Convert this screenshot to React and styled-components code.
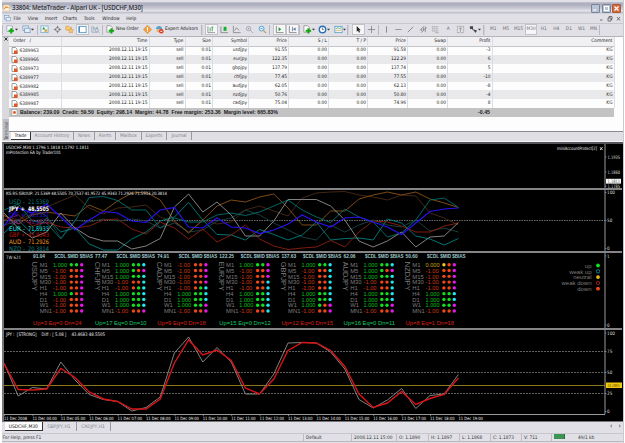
import React, { Component } from 'react';
import styled, { createGlobalStyle } from 'styled-components';

const GlobalStyle = createGlobalStyle`
  body {
    margin: 0;
    background: #fff;
    overflow: hidden;
  }
  * {
    box-sizing: border-box;
  }
`
const Window = styled.div`
  width: 622px;
  height: 443px;
  margin-left: 2px;
  padding-top: 2px;
  display: flex;
  flex-direction: column;
  background: #e0e0e6;
  border-right: 1px solid #c9c9cf;
  font-family: "DejaVu Sans Condensed", "Liberation Sans", sans-serif;
  font-size: 4.8px;
  line-height: 1;
  color: #222;
  white-space: nowrap;
`
const TitleBar = styled.div`
  height: 12px;
  display: flex;
  align-items: center;
  padding: 0 2px 0 1px;
  background: linear-gradient(#c4c4d0 0, #a9abbb 2px, #c6c7d1 6px, #e4e4ea 9px, #b9b9c4 11px, #e6e6ea 12px);
`
const Title = styled.span`
  flex: 1;
  margin-left: 2px;
  font-family: "Open Sans", sans-serif;
  font-weight: 600;
  font-size: 6.2px;
  letter-spacing: -0.15px;
  color: #33333c;
`
const WindowButton = styled.div`
  width: 9px;
  height: 9px;
  margin-left: 1.5px;
  border: 1px solid ${props => props.$close ? "#a8583c" : "#7c8296"};
  border-radius: 1px;
  background: ${props => props.$close ? "#d86a38" : "#b9c3d6"};
  svg {
    display: block;
  }
`
const MenuBar = styled.div`
  height: 9.5px;
  display: flex;
  align-items: center;
  padding-left: 2px;
  border-bottom: 1px solid #c8c8ce;
`
const MenuIcon = styled.svg`
  margin-right: 2.5px;
`
const MenuItem = styled.span`
  width: ${props => props.w}px;
  font-size: 4.9px;
`
const Spacer = styled.div`
  flex: 1;
`
const Toolbar = styled.div`
  height: 13.5px;
  display: flex;
  align-items: center;
  border-bottom: 1px solid #b4b4b8;
`
const Tool = styled.div`
  width: ${props => props.w}px;
  height: 11px;
  display: flex;
  flex: none;
  align-items: center;
  justify-content: center;
  color: #6a6a70;
  font-size: 4.8px;
  background: ${props => props.$pressed ? "#f6f6f8" : "none"};
  border: 1px solid ${props => props.$pressed ? "#c2c2c8" : "transparent"};
  svg {
    flex: none;
  }
`
const ToolLabel = styled.span`
  font-size: 4.8px;
  letter-spacing: -0.05px;
  margin-left: 0.5px;
  color: #222;
`
const Divider = styled.i`
  flex: none;
  width: 2px;
  height: 10px;
  margin-right: ${props => props.w - 2}px;
  border-left: 1px solid #b8b8be;
  border-right: ${props => props.$double ? "1px solid #d0d0d6" : "none"};
`
const Terminal = styled.div`
  height: 105px;
  display: flex;
  border-bottom: 1px solid #f4f4f4;
`
const TerminalGrip = styled.div`
  width: 7px;
  display: flex;
  flex-direction: column;
  justify-content: space-between;
  align-items: center;
  padding: 0 0 1px;
  background: #dadade;
`
const GripLabel = styled.span`
  writing-mode: vertical-rl;
  transform: rotate(180deg);
  height: 21px;
  background: #bcbcc2;
  color: #555;
  font-size: 4.9px;
  padding: 0 0.5px;
`
const TerminalBody = styled.div`
  flex: 1;
  display: flex;
  flex-direction: column;
  background: #fdfdfd;
`
const Table = styled.table`
  width: 605px;
  table-layout: fixed;
  border-collapse: collapse;
`
const HeaderRow = styled.tr`
  height: 9px;
  background-color: #f1f1f4;
  border-bottom: 1px solid #c4c4c8;
`
const Tr = styled.tr`
  height: 8.9px;
  background-color: ${props => props.$isEven ? "#fdfdfd" : "#e9e9ec"};
`
const Cell = styled.td`
  padding: 0 1px 0 0;
  text-align: ${props => props.$left ? "left" : "right"};
  padding-left: ${props => props.$left ? "1.5px" : "0"};
  border-right: 1px solid #dcdce4;
  font-size: 4.8px;
  font-weight: normal;
  overflow: hidden;
  svg {
    vertical-align: middle;
    margin-right: 2px;
  }
`
const SummaryRow = styled.div`
  height: 9px;
  width: 605px;
  display: flex;
  align-items: center;
  background: #c3c3c4;
  font-family: "Liberation Sans", Arial, sans-serif;
  font-weight: bold;
  font-size: 5.25px;
  color: #1c1c1c;
  svg {
    margin: 0 2.5px 0 1.5px;
  }
`
const SummaryText = styled.span`
  width: 458px;
`
const TerminalTabs = styled.div`
  height: 10px;
  display: flex;
  align-items: flex-start;
  background: #dfdfe4;
  border-top: 1px solid #8a8a90;
  padding-left: 2px;
`
const Tab = styled.span`
  width: ${props => props.w}px;
  height: 7.5px;
  line-height: 7px;
  text-align: center;
  font-size: 4.9px;
  color: ${props => props.$active ? "#111" : "#85858b"};
  background: ${props => props.$active ? "#fdfdfd" : "none"};
  border-right: 1px solid ${props => props.$active ? "#333" : "#9a9aa0"};
  border-bottom: ${props => props.$active ? "1px solid #333" : "none"};
`
const ChartTab = styled(Tab)`
  height: 9px;
  line-height: 9px;
`
const Charts = styled.div`
  height: 280px;
  display: flex;
  flex-direction: column;
  border: solid #77777a;
  border-width: 2px 0 1px 2px;
  border-top-color: #55555a;
  background: #000;
`
const Pane = styled.svg`
  display: block;
  flex: none;
  width: 618px;
  height: ${props => props.h}px;
  background: #000;
  border-bottom: ${props => props.$last ? "none" : "2px solid #858588"};
  font-family: "DejaVu Sans Condensed", "Liberation Sans", sans-serif;
`
const ChartTabs = styled.div`
  height: 11px;
  display: flex;
  align-items: flex-start;
  padding-left: 3px;
`
const StatusBar = styled.div`
  height: 9px;
  display: flex;
  align-items: center;
  border-top: 1px solid #c6c6cc;
  border-bottom: 1px solid #b8b8be;
  color: #333;
`
const StatusCell = styled.span`
  width: ${props => props.w}px;
  height: 7px;
  line-height: 7px;
  padding-left: ${props => props.$pad || 2}px;
  border-left: ${props => props.$first ? "none" : "1px solid #bcbcc2"};
  font-size: 4.8px;
`

const trades = [
  ["6389963", "usdjpy", "91.55", "91.58", "-3"],
  ["6389966", "eurjpy", "122.35", "122.29", "6"],
  ["6389973", "gbpjpy", "137.79", "137.74", "5"],
  ["6389977", "chfjpy", "77.45", "77.55", "-10"],
  ["6389982", "audjpy", "62.05", "62.13", "-8"],
  ["6389985", "nzdjpy", "50.76", "50.80", "-4"],
  ["6389987", "cadjpy", "75.04", "74.96", "8"],
]
const columns = [
  ["Order", 52], ["Time", 88], ["Type", 36], ["Size", 27.5], ["Symbol", 36], ["Price", 40], ["S / L", 40],
  ["T / P", 39], ["Price", 40], ["Swap", 40], ["Profit", 44.5], ["Comment", 122],
]

// One y value for every half-hour bar, 0 = top of the pane
const strength = [
  { color: "#4a2a18", y: [26, 30, 24, 17, 11, 5, 18, 24, 18, 17, 15, 27, 32, 42, 30, 34, 32, 20, 16, 21, 26, 8, 3, 2, 1.5, 5, 7, 10, 5, 6, 23, 28, 35] },
  { color: "#1c4444", y: [35, 31, 18, 26, 48, 30, 32, 29, 31, 29, 31, 38, 33, 42, 40, 31, 28, 20, 25, 33, 40, 47, 50, 35, 42, 35, 30, 35, 37, 30, 41, 38, 42] },
  { color: "#8a5418", y: [25, 34, 25, 22, 24, 26, 15, 21, 11, 3, 2, 10, 31, 43, 30, 16, 10, 12, 7, 4, 18, 35, 35, 21, 21, 9, 5, 2, 5, 2, 9, 13, 17.5] },
  { color: "#007070", y: [20, 14, 31, 33, 49, 31, 7.5, 6.5, 10.5, 20, 20, 38, 28, 32, 32, 25, 23, 25.5, 22, 16, 10, 20, 27, 32.5, 19, 27, 32, 47, 43, 30, 10, 8, 17.5] },
  { color: "#008080", y: [43, 30, 44, 28, 42, 38, 54, 60, 60, 49, 42, 31, 27, 12.5, 30, 44.5, 45, 50, 39.5, 44.5, 50, 45, 32, 50, 48.5, 48, 50, 29, 33, 46, 49, 55, 48.5] },
  { color: "#8c2010", y: [30, 25, 36, 32, 37, 38, 36, 30, 29, 39, 44, 32, 38, 49, 39, 52, 45, 35, 49, 56, 59.5, 58, 57, 50.5, 57, 42, 31, 32, 36, 42, 42, 36, 33] },
  { color: "#8e8e8e", y: [23, 38, 48, 42, 23, 38, 47, 51, 51, 59, 56, 48.5, 17, 4, 22, 12, 25, 46, 46, 31, 9.5, 9.5, 9.5, 16, 30, 51, 57, 51, 42, 57, 47, 46, 32.5] },
  { color: "#2a10f0", width: 1.2, y: [36, 18, 23, 14, 27, 40, 30, 21.5, 23, 31, 32.5, 20, 17.5, 37, 38, 28, 37, 38, 43.5, 40, 34, 25, 32, 37, 28, 27, 32, 37, 44.5, 33, 21.5, 19, 18] },
]
const rsWhite = [33, 66, 57.5, 59, 32, 50, 64.5, 69.5, 71.5, 81, 77.5, 67, 23, 7, 32, 17.5, 32, 64, 64, 44, 13, 12.5, 13, 22, 39, 69.5, 78, 70, 58.5, 78.5, 65.5, 64, 44.5]
const rsRed = [33.5, 59.5, 60, 59, 38.5, 47.5, 62, 69, 71.5, 79, 79, 69, 33, 10, 25, 20, 30.5, 58, 64, 49, 20.5, 12.5, 13, 20.5, 36.5, 64, 77.5, 73, 61.5, 74.5, 68.5, 64.5, 48]

const currencies = [
  ["USD -", "21.5369", "#0c7878"], ["JPY +", "48.5505", "#ffffff"], ["CHF +", "70.7537", "#2a10f0"], ["CAD -", "41.9572", "#8c1a8c"],
  ["EUR -", "71.5933", "#20e8e8"], ["GBP +", "45.9343", "#c01808"], ["AUD -", "71.2926", "#f09820"], ["NZD -", "20.3814", "#0c8080"],
]
const frames = ["M1", "M5", "M15", "M30", "H1", "H4", "D1", "W1", "MN1"]
// per time frame: candle, mid, bias dots (g green, r red, m magenta, c cyan, y yellow)
const pairs = [
  { name: "USDJPY", price: "91.04", sum: "Up=3 Eq=0 Dn=24", dots: "ggm rrm rrm rrm rrm grm rrm rrm rrm" },
  { name: "CHFJPY", price: "77.47", sum: "Up=17 Eq=0 Dn=10", up: true, dots: "ggc grm ggc rrc rgc ggc ggc ggc rrm" },
  { name: "CADJPY", price: "74.91", sum: "Up=9 Eq=0 Dn=18", dots: "rrm rrm rrm rrm rgc ggc ggc ggm rrm" },
  { name: "EURJPY", price: "122.25", sum: "Up=15 Eq=0 Dn=12", up: true, dots: "ggm rrm rrm rrc rrc ggc ggc ggc rrc" },
  { name: "GBPJPY", price: "137.63", sum: "Up=12 Eq=0 Dn=15", dots: "ggc rrc rrc rrc rrc ggc ggc grm rrm" },
  { name: "AUDJPY", price: "62.06", sum: "Up=16 Eq=0 Dn=11", up: true, dots: "ggc grm ggc rrc rrc ggc ggc ggm rrm" },
  { name: "NZDJPY", price: "50.60", sum: "Up=8 Eq=1 Dn=18", dots: "yrm rrm rrm rrm rrm ggc ggc ggm rrm" },
]
const dotColors = { g: "#10e020", r: "#f04818", m: "#e818e8", c: "#20e8f0", y: "#f0c818" }

const points = ys => ys.map((y, i) => `${i * 14.2},${y}`).join(" ")

// Text squeezed or stretched to a given width
const Fit = ({ w, children, ...rest }) => <text textLength={w} lengthAdjust="spacingAndGlyphs" {...rest}>{children}</text>

const Arrow = () => <svg width="3" height="3"><path d="M0 .7h3L1.5 2.5z" fill="#333" /></svg>

const icons = {
  newChart: <g><rect x="1" y="1" width="6" height="6" fill="#fff" stroke="#7d92a8" strokeWidth=".7" /><path d="M5.8 3.5v6M2.8 6.500h6" stroke="#12a812" strokeWidth="2.200" /></g>,
  profiles: <g fill="#e4eef8" stroke="#6d95bd" strokeWidth=".8"><rect x="1" y="1" width="6" height="5" /><rect x="3" y="3.5" width="6" height="5" /></g>,
  market: <g><rect x="1" y="1" width="8" height="7.5" fill="#e8f4fa" stroke="#71a9c8" strokeWidth=".8" /><path d="M2.500 5l1.500-3L6 5z" fill="#30a040" /><path d="M5 5h3v2.5H5z" fill="#e0a030" /></g>,
  data: <g fill="none" stroke="#777" strokeWidth=".9"><circle cx="5" cy="5" r="2.3" /><path d="M5 .8v3M5 6.2v3M.8 5h3M6.2 5h3" /></g>,
  navigator: <g fill="#f6cf83" stroke="#dc9a3c" strokeWidth=".8"><path d="M1 1.500h3l1 1h2v3H1z" /><path d="M6.5 3.500l.8 1.800 2 .2-1.5 1.300.5 2-1.8-1-1.8 1 .5-2L3.700 5.500l2-.2z" /></g>,
  terminal: <g><rect x="1" y="1.500" width="8" height="7" fill="#fff" stroke="#4f8fc0" strokeWidth=".9" /><path d="M1.500 2v6" stroke="#4f8fc0" strokeWidth="1.400" /></g>,
  tester: <g fill="none" stroke="#88a0b4" strokeWidth=".8"><path d="M1 1v7h6M3 6V2l2 3 2-3v3" /><circle cx="6.5" cy="6" r="1.800" /><path d="M8 7.500l1.500 1.500" /></g>,
  order: <g><path d="M1 .8h4l2 2V8H1z" fill="#fff" stroke="#777" strokeWidth=".7" /><path d="M6 3.500v6M3 6.500h6" stroke="#12a812" strokeWidth="2.200" /></g>,
  diamond: <g><path d="M5 .4L9.600 5 5 9.600.4 5z" fill="#f0a040" stroke="#d88420" strokeWidth=".6" /><path d="M5 2.500v3.200M5 6.500v1" stroke="#fff" strokeWidth="1.200" /></g>,
  expert: <g><path d="M1 4.500C1 0 8 0 8 4.500z" fill="#58a0d0" /><rect x="2" y="4.500" width="5" height="3.500" fill="#e8b070" /><circle cx="7" cy="7" r="2.500" fill="#d83820" /><path d="M5.800 7h2.400" stroke="#fff" /></g>,
  bars: <g fill="none" stroke="#777" strokeWidth=".8"><path d="M1 1.500v7h8" /><path d="M3.500 3v4M5.800 2v5M5 2.500h2" stroke="#189030" /></g>,
  candles: <g><path d="M1 1.500v7h8" fill="none" stroke="#777" strokeWidth=".8" /><rect x="4" y="2" width="3.200" height="4.500" fill="#18b030" /></g>,
  line: <g fill="none" stroke="#777" strokeWidth=".8"><path d="M1.500 1v7.500h8M3 6l2-3 3 3" /></g>,
  zoomIn: <g fill="none" stroke="#a0a0a8" strokeWidth=".9"><circle cx="4" cy="4" r="2.500" /><path d="M6 6l3 3M3 4h2M4 3v2" /></g>,
  zoomOut: <g fill="#e4f4fc" stroke="#4a98d0" strokeWidth="1"><circle cx="4" cy="4" r="2.700" /><path d="M2.800 4h2.400" /><path d="M6.200 6.200l2.800 2.800" stroke="#c89840" strokeWidth="1.300" /></g>,
  scroll: <g><path d="M1.500 1v7.500h8" fill="none" stroke="#777" strokeWidth=".9" /><path d="M4 2.500v4.500l3-2.200z" fill="#189830" /></g>,
  shift: <g><path d="M1.500 1v7.500h8M5 2v5" fill="none" stroke="#777" strokeWidth=".9" /><path d="M8.500 2.800v3.600L5.500 4.600z" fill="#3878b8" /></g>,
  clock: <g><circle cx="5" cy="5" r="3.600" fill="#eef6fc" stroke="#2c70b8" strokeWidth="1.500" /><path d="M5 3v2h1.500" fill="none" stroke="#444" strokeWidth=".7" /></g>,
  template: <g><rect x="1" y="1.500" width="8" height="7" fill="#f4fafc" stroke="#5b9cc0" strokeWidth=".9" /><path d="M2 4.500l2-1.500 2 1 2-1" fill="none" stroke="#38a048" strokeWidth=".8" /><path d="M2 6.800l2-1 2 .5 2-1" fill="none" stroke="#d89838" strokeWidth=".8" /></g>,
  cursor: <path d="M3 1v6.500l1.500-1.300 1 2.300 1.200-.6-1-2.100H7.500z" fill="#222" />,
  cross: <path d="M5 1v8M1 5h8" stroke="#777" strokeWidth=".8" />,
  vline: <path d="M5 1.500v7" stroke="#777" strokeWidth=".9" />,
  hline: <path d="M1.500 5h7" stroke="#888" strokeWidth=".9" />,
  trend: <path d="M2 8l6-6" stroke="#777" strokeWidth=".9" />,
  channel: <g fill="none" stroke="#777" strokeWidth=".8"><path d="M1 6l5-5M2.500 8.500l6-6M3 4v3M5 3v3M7 2v6" /></g>,
  fibo: <path d="M1 2h7M1 4.300h7M1 6.600h7M5 8.500h4" stroke="#888" strokeWidth=".8" strokeDasharray="1.500 .5" />,
  label: <g fill="none" stroke="#888" strokeWidth=".8"><rect x="1.500" y="1.500" width="7" height="7" strokeDasharray="1 .6" /><path d="M3.200 3.500h3.600M5 3.500v4" /></g>,
  arrows: <g fill="#444"><path d="M1 1.500h3.500v3H1zM5 5l4 1-2 3z" /><path d="M3 4l4 3" stroke="#444" /></g>,
}

const Icon = ({ name }) => <svg width="9" height="9" viewBox="0 0 10 10">{icons[name]}</svg>

const tools = [
  { w: 16, icon: "newChart", menu: true }, { w: 16.5, icon: "profiles", menu: true }, { sep: 2 },
  { w: 12.5, icon: "market" }, { w: 12.5, icon: "data" }, { w: 12.5, icon: "navigator" }, { w: 13, icon: "terminal", pressed: true }, { w: 12.5, icon: "tester" }, { sep: 2 },
  { w: 38, icon: "order", text: "New Order" }, { w: 11.5, icon: "diamond" }, { w: 47.5, icon: "expert", text: "Expert Advisors" }, { sep: 4.5, double: true },
  { w: 13, icon: "bars", pressed: true }, { w: 12.5, icon: "candles" }, { w: 12.5, icon: "line" }, { w: 13, icon: "zoomIn" }, { w: 13, icon: "zoomOut" }, { sep: 4 },
  { w: 13, icon: "scroll", pressed: true }, { w: 13, icon: "shift", pressed: true }, { sep: 2 },
  { w: 15.5, icon: "order", menu: true }, { w: 15.5, icon: "clock", menu: true }, { w: 15, icon: "template", menu: true }, { sep: 5, double: true },
  { w: 13, icon: "cursor", pressed: true }, { w: 13, icon: "cross" }, { sep: 2 },
  { w: 12, icon: "vline" }, { w: 12.5, icon: "hline" }, { w: 12.5, icon: "trend" }, { w: 12.5, icon: "channel" }, { w: 12.5, icon: "fibo" },
  { w: 12.5, label: "A" }, { w: 12.5, icon: "label" }, { w: 16, icon: "arrows", menu: true }, { sep: 4, double: true },
  { w: 12.6, label: "M1" }, { w: 12.6, label: "M5" }, { w: 12.6, label: "M15" }, { w: 12.6, label: "M30", pressed: true }, { w: 12.6, label: "H1" },
  { w: 12.6, label: "H4" }, { w: 12.6, label: "D1" }, { w: 12.6, label: "W1" }, { w: 11.5, label: "MN" }, { sep: 2 },
]

const OrderIcon = () => (
  <svg width="7" height="7" viewBox="0 0 7 7">
    <path d="M1 .5h3.500l1.500 1.500v4.500H1z" fill="#fff" stroke="#777" strokeWidth=".7" />
    <path d="M3 3.500h3.500V7H3z" fill="#e05828" />
  </svg>
)
const BalanceIcon = () => (
  <svg width="7" height="7" viewBox="0 0 7 7">
    <rect x="1" y=".5" width="5" height="6" fill="#fff" stroke="#999" strokeWidth=".6" />
    <circle cx="3.500" cy="3.500" r="1.400" fill="#e05828" />
  </svg>
)

class TradeTable extends Component {
  render() {
    return (
      <Table>
        <colgroup>{columns.map((c, i) => <col key={i} width={c[1]} />)}</colgroup>
        <thead>
          <HeaderRow>
            {columns.map((c, i) => <Cell as="th" $left={i === 0} key={i}>{i === 0 ? "\u00a0\u00a0Order \u00a0 /" : c[0]}</Cell>)}
          </HeaderRow>
        </thead>
        <tbody>
          {trades.map((t, i) => (
            <Tr $isEven={i % 2 === 0} key={t[0]}>
              <Cell $left><OrderIcon />{t[0]}</Cell>
              <Cell>2008.12.11 19:15</Cell>
              <Cell>sell</Cell>
              <Cell>0.01</Cell>
              <Cell>{t[1]}</Cell>
              <Cell>{t[2]}</Cell>
              <Cell>0.00</Cell>
              <Cell>0.00</Cell>
              <Cell>{t[3]}</Cell>
              <Cell>0.00</Cell>
              <Cell>{t[4]}</Cell>
              <Cell>KG</Cell>
            </Tr>
          ))}
        </tbody>
      </Table>
    )
  }
}

const Axis = ({ h, labels }) => (
  <g fill="#ddd" fontSize="4.600">
    <path d={`M601 0V${h}`} stroke="#999" strokeWidth="1" />
    {labels.map(([text, y]) => (
      <g key={text}>
        <path d={`M601 ${y}h1.500`} stroke="#999" strokeWidth=".7" />
        {text.length > 4
          ? <Fit w={12.5} x="603.500" y={y + 1.7}>{text}</Fit>
          : <text x="603" y={y + 1.7}>{text}</text>}
      </g>
    ))}
  </g>
)

const PricePane = () => (
  <Pane h={46} viewBox="0 0 618 44">
    <g fill="#eee" fontSize="4.500">
      <Fit w={83} x="2" y="5.300">USDCHF,M30  1.1796 1.1818 1.1792 1.1811</Fit>
      <Fit w={55} x="2" y="10.200">mProtection EA by Trader101</Fit>
      <Fit w={40} x="553" y="6">miniAccountProtect[2]</Fit>
    </g>
    <path d="M596 3.200l2.500 2.800M598.500 3.200l-2.500 2.800" stroke="#eee" strokeWidth=".9" />
    <Axis h={44} labels={[["1.1935", 13], ["1.1860", 28], ["1.1785", 42.2]]} />
    <rect x="602" y="34.800" width="15" height="4.800" fill="#fff" />
    <Fit w={12.5} x="603.500" y="39" fontSize="4.600" fill="#444">1.1811</Fit>
  </Pane>
)

const StrengthPane = () => (
  <Pane h={63} viewBox="0 0 618 61">
    <path d="M0 30.500H601" stroke="#999" strokeWidth=".7" strokeDasharray="1.500 1" />
    {strength.map((s, i) => (
      <polyline key={i} points={points(s.y)} fill="none" stroke={s.color} strokeWidth={s.width || 0.9} />
    ))}
    <Fit w={161} x="2" y="5.300" fontSize="4.500" fill="#eee">KG RS GROUP:   21.5369 48.5505 70.7537 41.9572 45.9343 71.2926 71.5933 20.3814</Fit>
    {currencies.map(([name, value, color], i) => (
      <g key={name} fill={color} fontSize="6.200" fontWeight={name[0] === "J" ? "bold" : "normal"}>
        <Fit w={16} x="5" y={13.8 + i * 6.72}>{name}</Fit>
        <Fit w={21} x="24" y={13.8 + i * 6.72}>{value}</Fit>
      </g>
    ))}
    <Axis h={61} labels={[["100", 2.5], ["50", 30.5], ["0", 58.5]]} />
  </Pane>
)

const PairColumn = ({ pair, x }) => (
  <g transform={`translate(${x} 0)`} fontFamily="Liberation Sans, Arial, sans-serif">
    <g fill="#9fc8cc" fontSize="4.800" fontWeight="bold">
      <text x="0" y="4.700">{pair.price}</text>
      <Fit w={38.5} x="21.500" y="4.700">$CDL $MID $BIAS</Fit>
    </g>
    <Fit w={29} transform="translate(-.6 8.800) rotate(90)" fontSize="7" fill="#7c7c7c">{pair.name}</Fit>
    {pair.dots.split(" ").map((row, i) => {
      const y = 12 + i * 5.77
      return (
        <g key={i} fontSize="5.900">
          <text x="6.700" y={y + 2.1} fill="#7c7c7c">{frames[i]}</text>
          <Fit w={row[0] === "r" ? 13 : 14} x="20" y={y + 2.1} fill={dotColors[row[0]]} opacity=".8">
            {row[0] === "g" ? "1.000" : row[0] === "y" ? "0.000" : "-1.00"}
          </Fit>
          {row.split("").map((d, k) => <circle key={k} cx={38.3 + k * 5.2} cy={y - 0.2} r="1.700" fill={dotColors[d]} />)}
        </g>
      )
    })}
    <Fit w={pair.sum.length > 15 ? 51.5 : 48.5} x="0" y="72" fontSize="5.900" fill={pair.up ? "#18c868" : "#d82018"}>{pair.sum}</Fit>
  </g>
)

const legend = [["up", "#10e020"], ["weak up", "#108898", true], ["neutral", "#e8b818"], ["weak down", "#982818", true], ["down", "#f04818"]]

const TrendPane = () => (
  <Pane h={77} viewBox="0 0 618 75">
    <Fit w={15} x="2" y="5.800" fontSize="4.500" fill="#ddd">TW 621</Fit>
    {pairs.map((p, i) => <PairColumn key={p.name} pair={p} x={29 + i * 62.1} />)}
    {legend.map(([text, color, hollow], i) => (
      <g key={text}>
        <text x="587.500" y={14.7 + i * 5.8} textAnchor="end" fontSize="6" fontFamily="Liberation Sans, sans-serif" fill="#7c7c7c">{text}</text>
        <circle cx="594" cy={12.5 + i * 5.8} r={hollow ? 1.7 : 1.9} fill={hollow ? "none" : color} stroke={color} strokeWidth={hollow ? 0.9 : 0} />
      </g>
    ))}
    <Axis h={75} labels={[["1", 3], ["0", 72]]} />
  </Pane>
)

const times = ["11 Dec 2008", "11 Dec 04:00", "11 Dec 05:00", "11 Dec 06:00", "11 Dec 07:00", "11 Dec 08:00", "11 Dec 09:00", "11 Dec 10:00",
  "11 Dec 11:00", "11 Dec 12:00", "11 Dec 13:00", "11 Dec 14:00", "11 Dec 15:00", "11 Dec 16:00", "11 Dec 17:00", "11 Dec 18:00", "11 Dec 19:00"]

const RsPane = () => (
  <Pane h={91} $last viewBox="0 0 618 91">
    <g stroke="#8a8a8a" strokeWidth=".7" strokeDasharray="2 1">
      <path d="M0 21.500H601M0 42.500H601M0 63.500H601" />
    </g>
    <path d="M0 55.500H601" stroke="#8c7818" />
    <polyline points={points(rsWhite)} fill="none" stroke="#8e8e8e" strokeWidth=".9" />
    <polyline points={points(rsRed)} fill="none" stroke="#d81414" strokeWidth="1.400" />
    <Fit w={99} x="2" y="5.600" fontSize="4.700" fill="#eee">JPY :&nbsp; [STRONG] &nbsp; &nbsp;Diff : [ 5.08 ] &nbsp; &nbsp;43.4683 48.5505</Fit>
    <Axis h={84} labels={[["100", 3], ["75", 21.5], ["50", 42.5], ["25", 63.5], ["0", 81.5]]} />
    <rect x="602" y="52.500" width="16" height="5.500" fill="#f0c810" />
    <Fit w={12} x="603.500" y="56.900" fontSize="4.200" fill="#5a4808">34.2895</Fit>
    <path d="M0 84.500H601" stroke="#999" />
    {times.map((t, i) => (
      <g key={t}>
        <path d={`M${i * 28.4 + 0.5} 84v2`} stroke="#999" strokeWidth=".7" />
        <Fit w={i === 0 ? 23 : 24.5} x={i * 28.4} y="90" fontSize="4.400" fill="#eee">{t}</Fit>
      </g>
    ))}
  </Pane>
)

export default class App extends Component {
  render() {
    return (
      <Window>
        <GlobalStyle />
        <TitleBar>
          <svg width="7" height="8" viewBox="0 0 8 8">
            <rect x=".5" y=".5" width="7" height="7" rx="1.500" fill="#fbf3e6" stroke="#e8b878" strokeWidth=".6" />
            <path d="M1.500 5l2-2.500 3 1.500" fill="none" stroke="#e08a28" strokeWidth="1.200" />
          </svg>
          <Title>33804: MetaTrader - Alpari UK - [USDCHF,M30]</Title>
          <WindowButton><svg width="7" height="7"><path d="M1.500 5h2.500" stroke="#fff" strokeWidth="1.300" /></svg></WindowButton>
          <WindowButton><svg width="7" height="7"><rect x="1.500" y="1.500" width="4" height="4" fill="none" stroke="#fff" /></svg></WindowButton>
          <WindowButton $close><svg width="7" height="7"><path d="M1.500 1.500l4 4M5.500 1.500l-4 4" stroke="#fff" strokeWidth="1.200" /></svg></WindowButton>
        </TitleBar>

        <MenuBar>
          <MenuIcon width="7" height="7" viewBox="0 0 10 10">{icons.profiles}</MenuIcon>
          <MenuItem w={14.2}>File</MenuItem>
          <MenuItem w={17}>View</MenuItem>
          <MenuItem w={18}>Insert</MenuItem>
          <MenuItem w={21}>Charts</MenuItem>
          <MenuItem w={18.5}>Tools</MenuItem>
          <MenuItem w={24}>Window</MenuItem>
          <MenuItem w={14}>Help</MenuItem>
          <Spacer />
          <svg width="24" height="7" fill="none" stroke="#555" strokeWidth=".8">
            <path d="M1 5h2.500M9 3h3v3H9zM10 3V1.500h3v3h-1M18 2l3 3.500M21 2l-3 3.500" />
          </svg>
        </MenuBar>

        <Toolbar>
          <Divider w={2} />
          {tools.map((t, i) => t.sep
            ? <Divider key={i} w={t.sep} $double={t.double} />
            : (
              <Tool key={i} w={t.w} $pressed={t.pressed}>
                {t.icon && <Icon name={t.icon} />}
                {t.label}
                {t.text && <ToolLabel>{t.text}</ToolLabel>}
                {t.menu && <Arrow />}
              </Tool>
            ))}
        </Toolbar>

        <Terminal>
          <TerminalGrip>
            <svg width="4" height="4"><path d="M.5 .5l3 3M3.500 .5l-3 3" stroke="#222" strokeWidth=".9" /></svg>
            <GripLabel>Terminal</GripLabel>
          </TerminalGrip>
          <TerminalBody>
            <TradeTable />
            <SummaryRow>
              <BalanceIcon />
              <SummaryText>Balance: 239.09&nbsp; Credit: 59.50&nbsp; Equity: 298.14&nbsp; Margin: 44.78&nbsp; Free margin: 253.36&nbsp; Margin level: 665.83%</SummaryText>
              -0.45
            </SummaryRow>
            <Spacer />
            <TerminalTabs>
              <Tab w={20} $active>Trade</Tab>
              <Tab w={43}>Account History</Tab>
              <Tab w={21}>News</Tab>
              <Tab w={21}>Alerts</Tab>
              <Tab w={26}>Mailbox</Tab>
              <Tab w={25}>Experts</Tab>
              <Tab w={25}>Journal</Tab>
            </TerminalTabs>
          </TerminalBody>
        </Terminal>

        <Charts>
          <PricePane />
          <StrengthPane />
          <TrendPane />
          <RsPane />
        </Charts>

        <ChartTabs>
          <ChartTab w={37.5} $active>USDCHF,M30</ChartTab>
          <ChartTab w={34}>GBPJPY,H1</ChartTab>
          <ChartTab w={34}>CADJPY,H1</ChartTab>
          <Spacer />
          <svg width="14" height="8" fill="#999"><path d="M3 2v4L1 4zM10 2v4l2-2z" /></svg>
        </ChartTabs>

        <StatusBar>
          <StatusCell $first w={301} $pad={0.5}>For Help, press F1</StatusCell>
          <StatusCell w={48}>Default</StatusCell>
          <StatusCell w={45}>2008.12.11 15:00</StatusCell>
          <StatusCell w={32}>O: 1.1890</StatusCell>
          <StatusCell w={31}>H: 1.1897</StatusCell>
          <StatusCell w={31}>L: 1.1868</StatusCell>
          <StatusCell w={31}>C: 1.1873</StatusCell>
          <StatusCell w={30}>V: 711</StatusCell>
          <StatusCell w={25}>
            <svg width="11" height="5"><rect width="11" height="5" fill="#286848" /><path d="M1 0v5M3 0v5M5 0v5M7 0v5M9 0v5" stroke="#50c060" /></svg>
          </StatusCell>
          <StatusCell $first w={34}>49/1 kb</StatusCell>
        </StatusBar>
      </Window>
    )
  }
}
